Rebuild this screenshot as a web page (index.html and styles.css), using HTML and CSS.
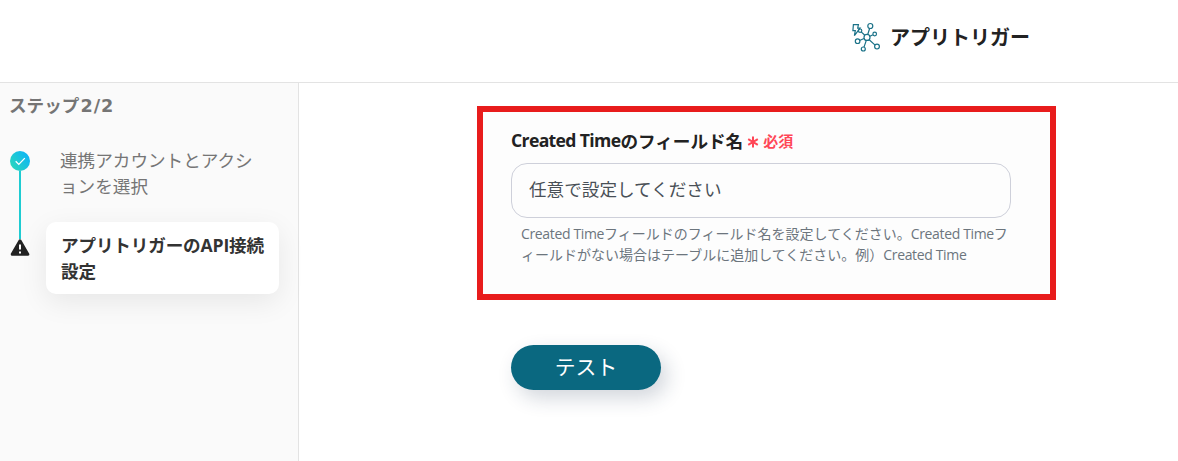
FILE: index.html
```
<!DOCTYPE html>
<html lang="ja">
<head>
  <meta charset="UTF-8">
  <meta name="viewport" content="width=device-width, initial-scale=1.0">
  <title>アプリトリガー</title>
  <link rel="stylesheet" href="styles.css">
</head>
<body>

  <header class="header">
    <svg class="logo" viewBox="0 0 40 38" width="40" height="38">
      <path d="M7.4 6.6h5l-.7 3.5h2.4L8.4 17.7l.9-5H6.9z"/>
      <path d="M21.8 16.3l1.9-6M24 18.2l2.9-1.4M23.2 21.7l5.9 5.4M20.3 22.4l-2.3 6.7M18 20.5l-4.4 2M18.8 17.3l-3.6-3.4"/>
      <circle cx="21" cy="19.4" r="3"/>
      <circle cx="24.3" cy="8" r="2.5"/>
      <circle cx="28.7" cy="16" r="1.8"/>
      <circle cx="31" cy="28.6" r="2.4"/>
      <circle cx="17.3" cy="31" r="2"/>
      <circle cx="11.6" cy="23.2" r="2.3"/>
      <circle cx="14.1" cy="12.7" r="1.7"/>
    </svg>
    <h1>アプリトリガー</h1>
  </header>

  <div class="layout">
    <aside class="sidebar">
      <p class="step-count">ステップ<span>2/2</span></p>
      <div class="steps">
        <div class="progress">
          <svg width="20" height="20" viewBox="0 0 20 20">
            <defs>
              <linearGradient id="grad" x1="0" y1="1" x2="1" y2="0.3">
                <stop offset="0" stop-color="#2edbb5"/>
                <stop offset="1" stop-color="#0db5f5"/>
              </linearGradient>
            </defs>
            <circle cx="10" cy="10" r="10" fill="url(#grad)"/>
            <path d="M5.7 10.2l3.1 3.2 6-6.3" fill="none" stroke="#fff" stroke-width="1.3"/>
          </svg>
          <div class="line"></div>
          <svg width="20" height="18" viewBox="0 0 20 18">
            <path d="M10 1.7L17.8 15.3H2.2z" fill="#222" stroke="#222" stroke-width="3" stroke-linejoin="round"/>
            <path d="M10 5.6v5M10 12.6v2" stroke="#fff" stroke-width="2"/>
          </svg>
        </div>
        <div class="step-list">
          <div class="step">連携アカウントとアクションを選択</div>
          <div class="step active">アプリトリガーのAPI接続設定</div>
        </div>
      </div>
    </aside>

    <main class="content">
      <div class="field-box">
        <label class="label" for="field"><span class="label-en">Created Time</span>のフィールド名<svg class="asterisk" width="12" height="12" viewBox="0 0 12 12"><path d="M6 .5v11M1.2 3.2l9.6 5.6M10.8 3.2L1.2 8.8"/></svg><span class="required">必須</span></label>
        <input class="input" id="field" type="text" value="任意で設定してください">
        <p class="help"><span>Created Time</span>フィールドのフィールド名を設定してください。<span>Created Time</span>フ<br>ィールドがない場合はテーブルに追加してください。例）<span>Created Time</span></p>
      </div>
      <button class="btn-test">テスト</button>
    </main>
  </div>

</body>
</html>
```
FILE: styles.css
```
* {
  box-sizing: border-box;
}

body {
  margin: 0;
  height: 461px;
  display: flex;
  flex-direction: column;
  overflow: hidden;
  background: #fff;
  color: #222;
  font-family: "Open Sans", "Noto Sans CJK JP", sans-serif;
  font-size: 17.6px;
}

.header {
  height: 83px;
  padding: 18px 0 0 846px;
  display: flex;
  align-items: flex-start;
  border-bottom: 1px solid #e3e3e3;
}

.logo {
  fill: none;
  stroke: #1b7288;
  stroke-width: 1.2;
}

h1 {
  margin: 0 0 0 4px;
  font-size: 20px;
  line-height: 40px;
  font-weight: bold;
}

.layout {
  flex: 1;
  display: flex;
}

.sidebar {
  width: 299px;
  padding: 9px 19px 0 9px;
  background: #fafafa;
  border-right: 1px solid #e3e3e3;
}

.step-count {
  margin: 0;
  height: 26px;
  color: #757575;
  font-weight: bold;
  line-height: 26px;
}

.step-count span {
  margin-left: 1px;
  font-family: "DejaVu Sans", sans-serif;
  letter-spacing: 1px;
}

.steps {
  margin-top: 29px;
  padding-left: 1px;
  display: flex;
  gap: 16px;
}

.progress {
  width: 20px;
  padding-top: 4px;
  display: flex;
  flex-direction: column;
  align-items: center;
}

.line {
  width: 2px;
  height: 68px;
  background: #1fccd2;
}

.step-list {
  width: 233px;
}

.step {
  padding: 0 14px;
  line-height: 26px;
  color: #757575;
}

.step.active {
  height: 72px;
  margin-top: 23px;
  padding: 10px 12px 10px 15px;
  background: #fff;
  border-radius: 10px;
  color: #333;
  font-weight: bold;
  letter-spacing: -0.15px;
  box-shadow: 0 8px 28px rgba(0, 0, 0, 0.08);
}

.content {
  padding: 23px 0 0 178px;
}

.field-box {
  width: 579px;
  height: 194px;
  padding: 21px 28px 0;
  border: 6px solid #e81c1c;
  background: #fdfdfd;
}

.label {
  display: flex;
  align-items: center;
  height: 14px;
  font-weight: bold;
}

.label-en {
  letter-spacing: -0.65px;
}

.asterisk {
  margin: 4px 4px 0;
  fill: none;
  stroke: #ff4757;
  stroke-width: 2;
}

.required {
  color: #ff4757;
  font-size: 15px;
}

.input {
  display: block;
  width: 500px;
  height: 55px;
  margin-top: 16px;
  padding: 0 17px 5px;
  border: 1px solid #ced0da;
  border-radius: 16px;
  background: #fdfdfd;
  color: #495057;
  font-family: inherit;
  font-size: 17.6px;
}

.help {
  margin: 5px 0 0 10px;
  color: #6c757d;
  font-size: 14px;
  line-height: 21px;
  white-space: nowrap;
}

.help span {
  letter-spacing: -0.35px;
}

.btn-test {
  display: block;
  width: 150px;
  height: 45px;
  margin: 45px 0 0 34px;
  padding: 0 0 3px;
  border: none;
  border-radius: 23px;
  background: #0a6880;
  color: #fff;
  font-family: inherit;
  font-size: 20.8px;
  box-shadow: 6px 8px 20px rgba(30, 50, 80, 0.2);
}
```
